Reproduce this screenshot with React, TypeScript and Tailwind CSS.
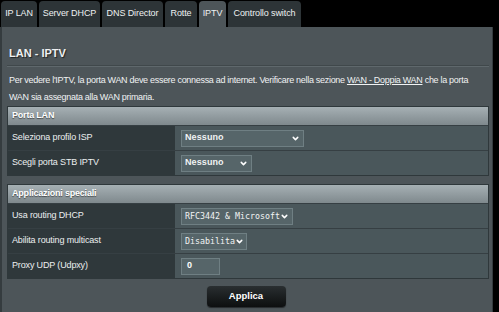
import { ChevronDown } from "lucide-react";

const tabs = [
  { label: "IP LAN", w: "w-[36px]" },
  { label: "Server DHCP", w: "w-[61px]" },
  { label: "DNS Director", w: "w-[61px]" },
  { label: "Rotte", w: "w-[32px]" },
  { label: "IPTV", w: "w-[27px]", active: true },
  { label: "Controllo switch", w: "w-[73px]" },
];

function Select({ value, width, mono }: { value: string; width: string; mono?: boolean }) {
  return (
    <div
      className={`flex h-[17px] ${width} items-center justify-between border border-[#6f7f83] bg-[#566569] pl-[3px] pr-[3px] text-[#f1f3f3]`}
    >
      <span
        className={
          mono
            ? "whitespace-nowrap font-['DejaVu_Sans_Mono',monospace] text-[8.3px]"
            : "whitespace-nowrap text-[9px] font-bold tracking-[0.1px]"
        }
      >
        {value}
      </span>
      <ChevronDown size={9} strokeWidth={4} className="shrink-0 text-white" />
    </div>
  );
}

function Row({ label, children }: { label: string; children: React.ReactNode }) {
  return (
    <div className="flex h-[25px] border-t border-[#363f43]">
      <div className="flex w-[167px] items-center bg-[#2f383b] pl-[4px] text-[9px] tracking-[-0.15px] text-[#eceff0]">
        {label}
      </div>
      <div className="flex flex-1 items-center bg-[#4a575b] pl-[6px]">{children}</div>
    </div>
  );
}

function Section({ title, children }: { title: string; children: React.ReactNode }) {
  return (
    <div className="border border-[#2f383b]">
      <div className="flex h-[18px] items-center bg-gradient-to-b from-[#a6b0b4] to-[#7f898d] pl-[4px] text-[9px] font-bold tracking-[-0.2px] text-white [text-shadow:0_1px_1px_rgba(0,0,0,0.5)]">
        {title}
      </div>
      {children}
    </div>
  );
}

export default function App() {
  return (
    <div className="h-[312px] w-[499px] overflow-hidden bg-black font-['Liberation_Sans',Arial,sans-serif]">
      <div className="flex h-[27px] gap-[2px] pl-[1px] pt-[1px]">
        {tabs.map((t) => (
          <div
            key={t.label}
            className={`flex ${t.w} items-center justify-center rounded-t-[4px] text-[9px] tracking-[-0.1px] text-[#eef1f2] ${
              t.active ? "bg-[#4d5559]" : "bg-[#2d3437]"
            }`}
          >
            {t.label}
          </div>
        ))}
      </div>
      <div className="flex h-[285px] w-[493px] flex-col border-l-[2px] border-r border-[#353c3f] bg-[#4d5559] pl-[5px] pr-[3px]">
        <div className="mt-[18px] pl-[2px] text-[11px] font-bold leading-[16px] text-[#eef0f1] [text-shadow:1px_1px_1px_rgba(0,0,0,0.6)]">
          LAN - IPTV
        </div>
        <div className="mt-[4px] h-[2px] border-b border-t border-[#40484b] border-b-[#5f686c]" />
        <p className="mt-[5px] pl-[2px] text-[9px] leading-[17px] tracking-[-0.3px] text-[#f0f2f3]">
          Per vedere l&apos;IPTV, la porta WAN deve essere connessa ad internet. Verificare nella sezione{" "}
          <span className="underline">WAN - Doppia WAN</span> che la porta WAN sia assegnata alla WAN primaria.
        </p>
        <Section title="Porta LAN">
          <Row label="Seleziona profilo ISP">
            <Select value="Nessuno" width="w-[123px]" />
          </Row>
          <Row label="Scegli porta STB IPTV">
            <Select value="Nessuno" width="w-[71px]" />
          </Row>
        </Section>
        <div className="mt-[8px]">
          <Section title="Applicazioni speciali">
            <Row label="Usa routing DHCP">
              <Select value="RFC3442 & Microsoft" width="w-[112px]" mono />
            </Row>
            <Row label="Abilita routing multicast">
              <Select value="Disabilita" width="w-[66px]" mono />
            </Row>
            <Row label="Proxy UDP (Udpxy)">
              <div className="flex h-[17px] w-[39px] items-center border border-[#6f7f83] bg-[#566569] pl-[5px] text-[9px] font-bold text-white">
                0
              </div>
            </Row>
          </Section>
        </div>
        <div className="mt-[7px] flex justify-center">
          <button className="ml-[-4px] h-[21px] w-[79px] rounded-[4px] bg-gradient-to-b from-[#2a2f31] to-[#0d0f10] text-[9.5px] font-bold text-white shadow-[0_1px_1px_rgba(0,0,0,0.5)]">
            Applica
          </button>
        </div>
      </div>
    </div>
  );
}
